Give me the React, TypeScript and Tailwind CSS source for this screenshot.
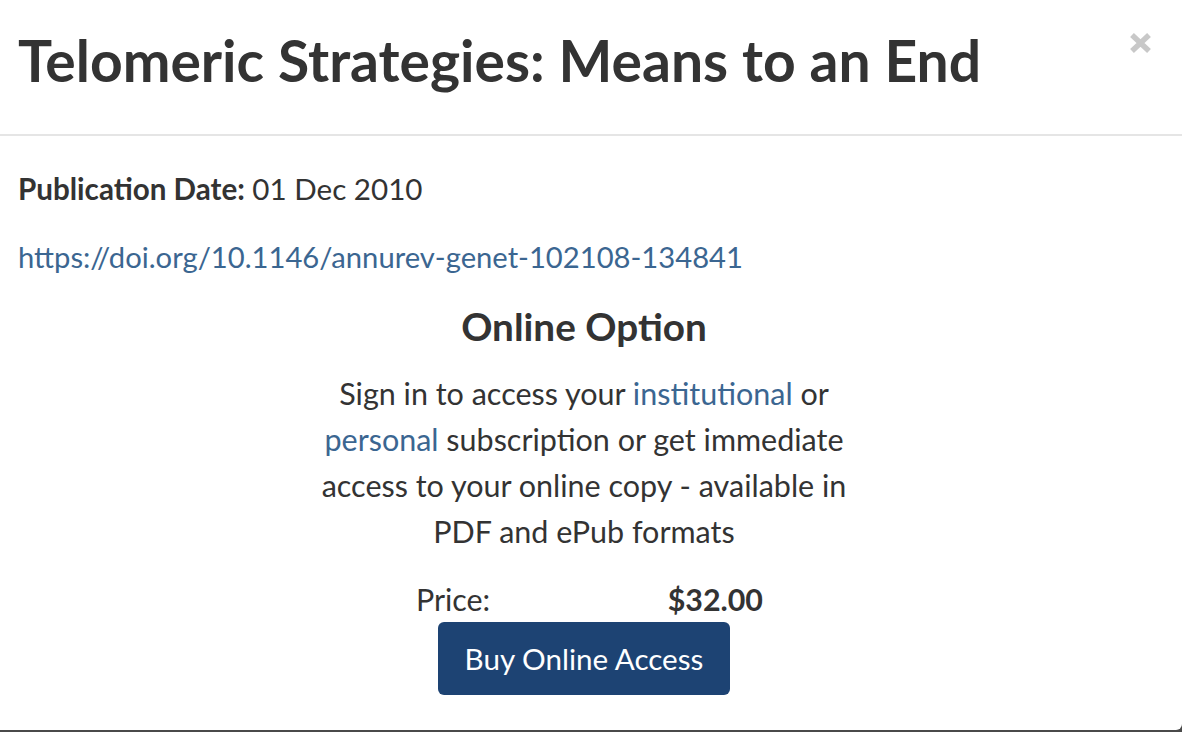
import React from "react";

export default function App() {
  return (
    <div className="w-[1182px] h-[732px] bg-[#4a4a4a] overflow-hidden font-['Lato',sans-serif] text-[#333333]">
      <div className="w-[1182px] h-[730px] bg-white rounded-br-[6px] flex flex-col">
        {/* Header */}
        <div className="h-[136px] border-b-2 border-[#e5e5e5] flex justify-between pl-[18px] pr-[30px]">
          <h4 className="pt-[26px] text-[57px] leading-[68px] font-bold whitespace-nowrap">
            Telomeric Strategies: Means to an End
          </h4>
          <button className="mt-[32px] w-[23px] h-[22px] flex items-center justify-center" aria-label="Close">
            <svg width="23" height="22" viewBox="0 0 23 22">
              <path d="M3 3 L20 19 M20 3 L3 19" stroke="#c8c8c8" strokeWidth="5.5" strokeLinecap="butt" />
            </svg>
          </button>
        </div>

        {/* Body */}
        <div className="pl-[18px] pr-[32px] pt-[30px]">
          <p className="text-[29px] leading-[46px] whitespace-nowrap">
            <span className="font-bold text-[29.6px]">Publication Date:</span>{" "}
            <span className="text-[29.6px]">01 Dec 2010</span>
          </p>
          <p className="mt-[22px] text-[29.2px] leading-[46px] whitespace-nowrap">
            <a className="text-[#3b6691]">https://doi.org/10.1146/annurev-genet-102108-134841</a>
          </p>

          <div className="flex flex-col items-center">
            <h4 className="mt-[22px] text-[38.7px] leading-[48px] font-bold">Online Option</h4>
            <p className="mt-[20px] text-[30.5px] leading-[46px] text-center whitespace-nowrap">
              Sign in to access your <a className="text-[#3b6691]">institutional</a> or
              <br />
              <a className="text-[#3b6691]">personal</a> subscription or get immediate
              <br />
              access to your online copy - available in
              <br />
              PDF and ePub formats
            </p>
            <div className="mt-[22px] ml-[11px] w-[347px] flex justify-between text-[30.4px] leading-[46px]">
              <span>Price:</span>
              <span className="font-bold">$32.00</span>
            </div>
            <button className="mt-0 h-[73px] px-[27px] rounded-[6px] bg-[#1d4373] text-white text-[29.6px] leading-[69px] whitespace-nowrap">
              Buy Online Access
            </button>
          </div>
        </div>
      </div>
    </div>
  );
}
